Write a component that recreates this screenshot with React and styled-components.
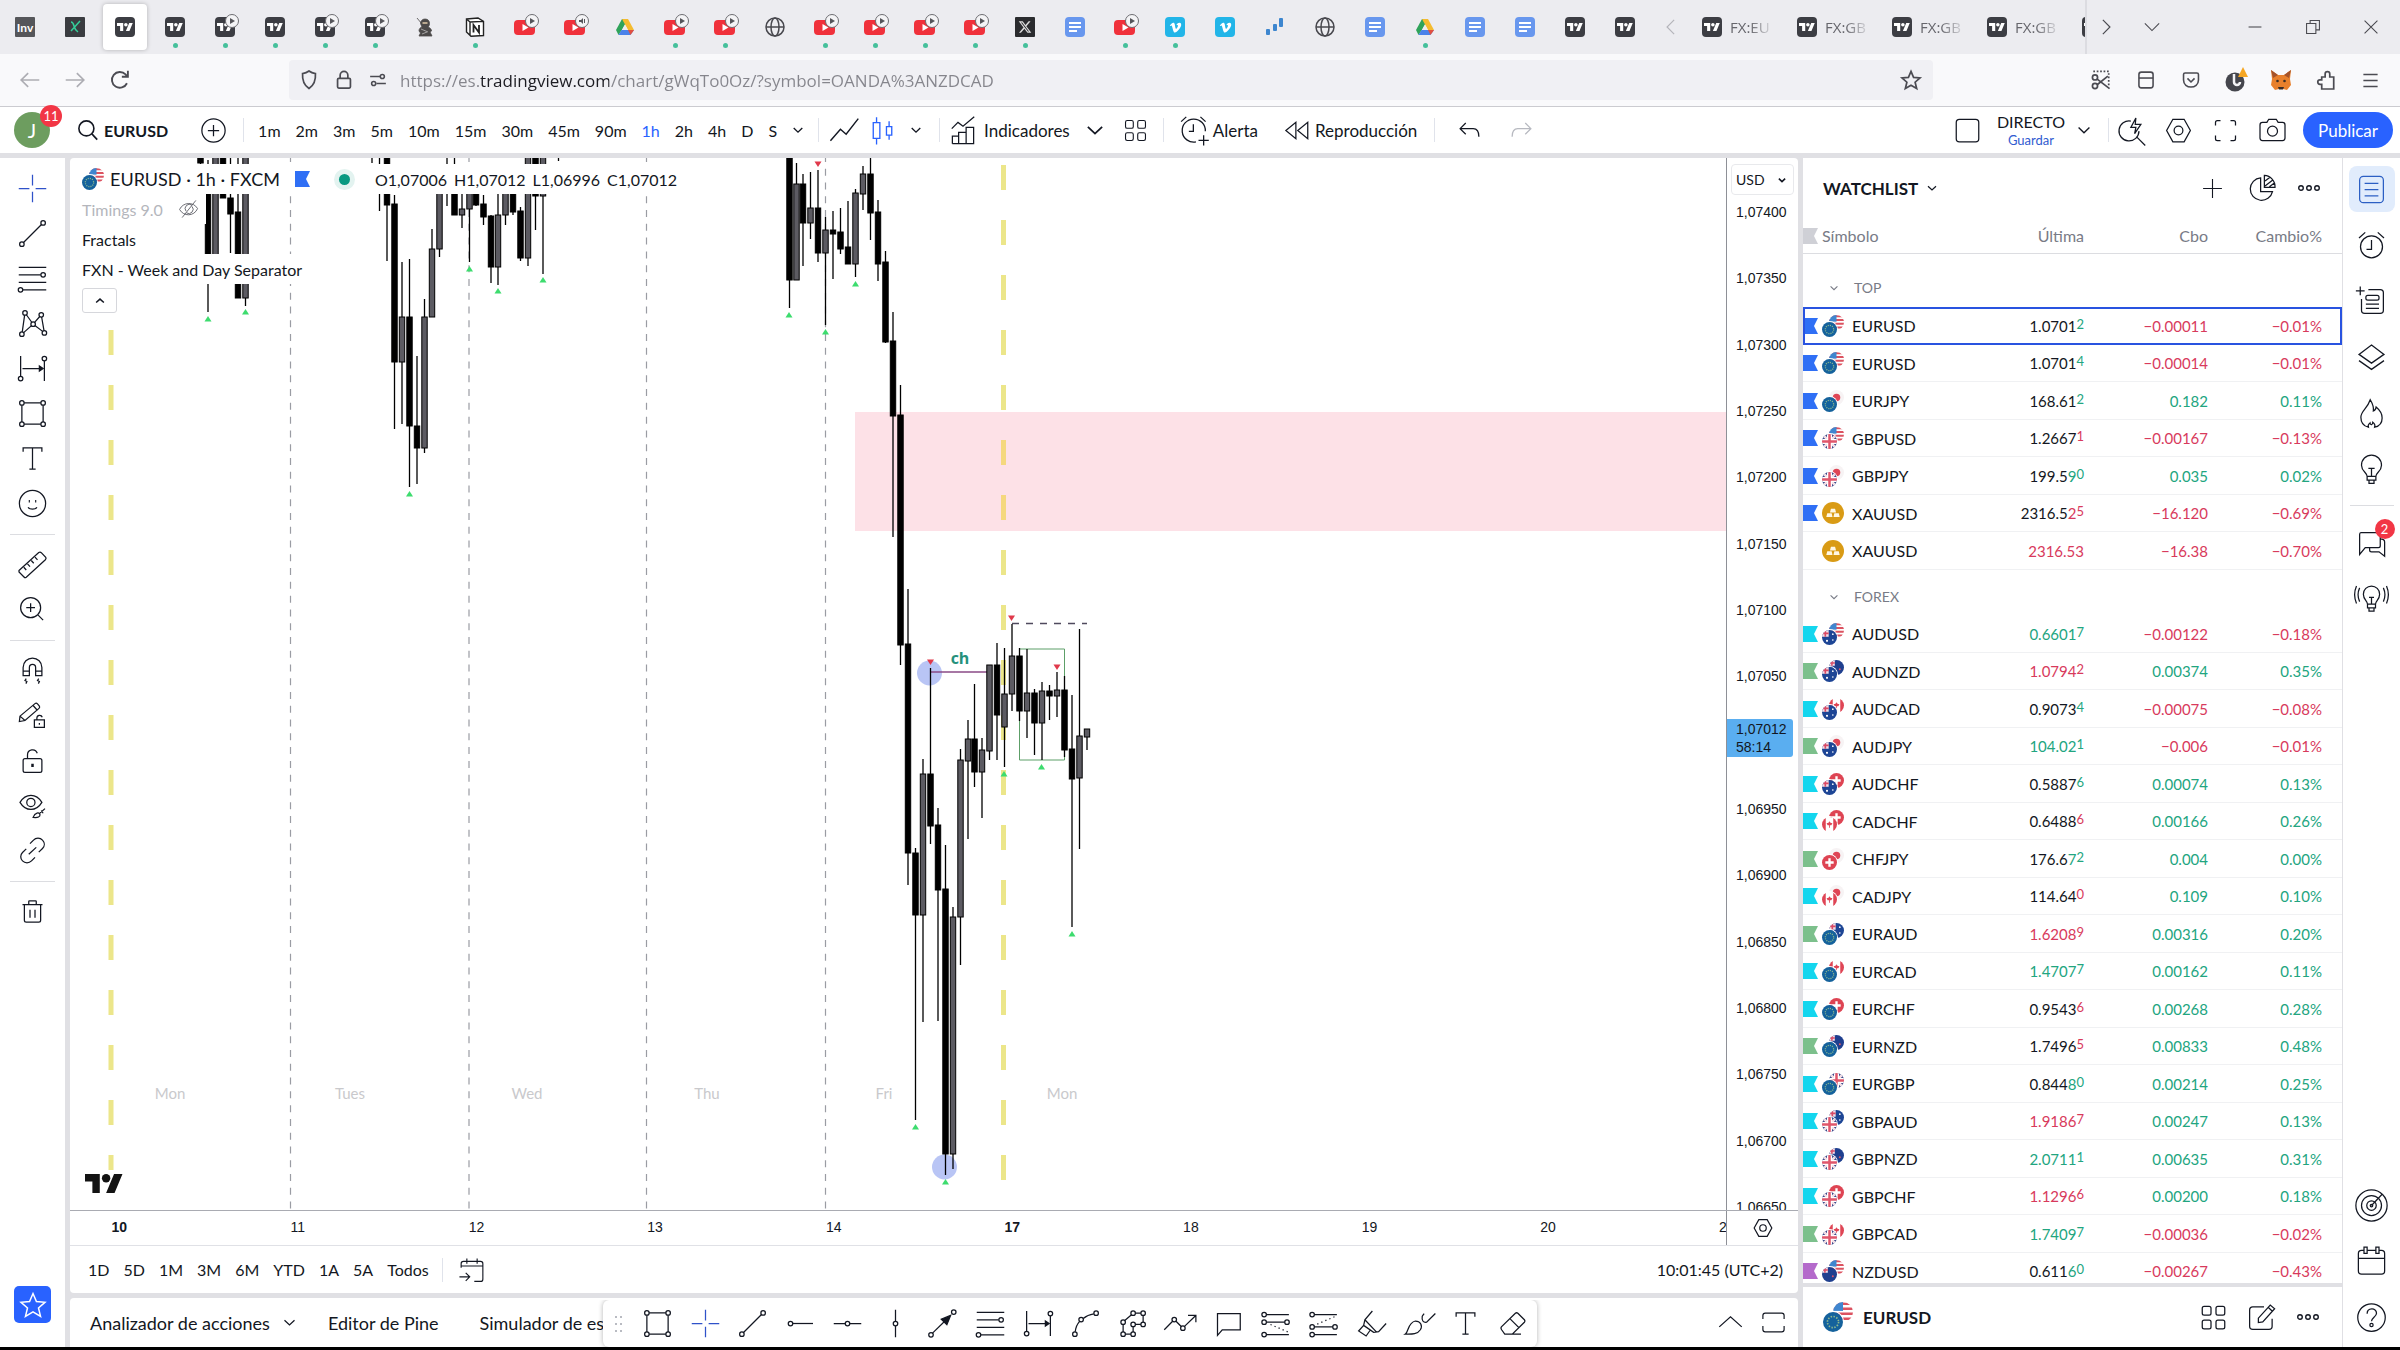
import React from 'react';
import styled, { createGlobalStyle, css } from 'styled-components';
import { FaVimeoV, FaXTwitter } from 'react-icons/fa6';

const GlobalStyle = createGlobalStyle`
    * {
        box-sizing: border-box;
    }

    body {
        margin: 0;
        background: #000;
        color: #131722;
        font-family: Lato, 'Liberation Sans', sans-serif;
        font-size: 16px;
    }

    button, input, select {
        font: inherit;
        color: inherit;
        background: none;
        border: none;
        padding: 0;
        margin: 0;
    }

    button {
        cursor: pointer;
    }

    svg {
        display: block;
        flex-shrink: 0;
    }
`;

/* ---------- Icons (28 x 28 grid, thin strokes) ---------- */

const dot = (cx, cy, r = 1.8) => <circle key={`${cx}-${cy}`} cx={cx} cy={cy} r={r} />;

const ICONS = {
    cross: <path d="M14 3v8.5M14 16.5V25M3 14h8.5M16.5 14H25" />,
    trend: <>{dot(5.5, 22.5)}{dot(22.5, 5.5)}<path d="M6.8 21.2 21.2 6.8" /></>,
    fib: <><path d="M3 5h22M3 11h17.6M3 17h22M6.2 23H25" />{dot(22.5, 11)}{dot(4.4, 23)}</>,
    pattern: (
        <>
            {dot(8, 5.5)}{dot(21, 7)}{dot(14.5, 14.5)}{dot(5.5, 22.5)}{dot(23.5, 21.5)}
            <path d="M5.8 20.7 7.7 7.3M9.1 7l4.3 6M15.7 13.1l4.1-4.7M21.3 8.8l1.9 10.9M6.9 21.3l6.3-5.6M15.9 15.6l6.2 4.7" />
        </>
    ),
    projection: (
        <>
            {dot(4.5, 22)}{dot(23.5, 6)}
            <path d="M4.5 4v16.2M23.5 7.8V24M6 14h14" />
            <path d="m19.5 12 3 2-3 2z" fill="currentColor" />
        </>
    ),
    rect: (
        <>
            {dot(5.5, 5.5)}{dot(22.5, 5.5)}{dot(5.5, 22.5)}{dot(22.5, 22.5)}
            <path d="M7.3 5.5h13.4M7.3 22.5h13.4M5.5 7.3v13.4M22.5 7.3v13.4" />
        </>
    ),
    text: <path d="M6.5 8.5v-3h15v3M14 5.5v17M11.5 22.5h5" />,
    smile: (
        <>
            <circle cx="14" cy="14" r="10.5" />
            <path d="M10.5 17c1 2 6 2 7 0" />
            <path d="M11 12.2h.9M16.1 12.2h.9" strokeWidth="2" />
        </>
    ),
    ruler: (
        <>
            <path d="M3.2 18.8 19 4.4q1.2-.8 2.2.3l3.4 3.6q.6 1-.3 1.9L9 24.2q-1 .7-1.8-.2l-4-4z" />
            <path d="m7 16.2 2 2.2M10 13.5l2 2.2M13 10.8l2 2.2M16 8.1l2 2.2" />
        </>
    ),
    zoomIn: <><circle cx="12.5" cy="12.5" r="8" /><path d="m18.5 18.5 4 4M12.5 9v7M9 12.5h7" /></>,
    magnet: (
        <>
            <path d="M6.5 18v-6.5a7.5 7.5 0 0 1 15 0V18h-5v-6.5a2.5 2.5 0 0 0-5 0V18zM6.5 14.5h5M16.5 14.5h5" />
            <path d="M9 20.5l-1 1.5 1.5.8-.8 1.7M19 20.5l-1 1.5 1.5.8-.8 1.7" />
        </>
    ),
    pencilLock: (
        <>
            <path d="m4 14.5 12-10q1-.8 2 .2l1.5 1.8q.6 1-.3 1.8L8 18l-4.5.8zM4.2 14.7 8 18M14.5 6l3.5 4" />
            <path d="M15.5 17.5h8v6h-8zM17.5 17.5V16a2.2 2.2 0 0 1 4.3-.6M19.5 20v1.4" />
        </>
    ),
    lock: (
        <>
            <rect x="6.5" y="12.5" width="15" height="11" rx="1.5" />
            <path d="M10 12.5v-3a4 4 0 0 1 7.8-1.3" />
            <path d="M14 16.6v2.6" strokeWidth="2" />
        </>
    ),
    eyeBrush: (
        <>
            <path d="M4 11.5c4.5-7.5 13-7.5 17.5 0-4.5 7.5-13 7.5-17.5 0z" />
            <circle cx="12.7" cy="11.5" r="3.3" />
            <path d="M14.5 23.5c1.5-4 5-4.5 5.5-2.2.2 1.6-1.5 2.7-5.5 2.2zM20 20l4-3.5M21 18l1.5 2.2" />
        </>
    ),
    link: (
        <>
            <path d="m12 8.5 2.8-2.8a4.7 4.7 0 0 1 7.2 0c1.9 2 1.9 4.8 0 6.7L19 15.3M9 12.7l-3 2.9a4.7 4.7 0 0 0 0 6.7c2 2 5.2 2 7.2 0l2.8-2.8" />
            <path d="m11 17 6-5.5" />
        </>
    ),
    trash: <path d="M6 8.5h16M11 8V6q0-.5.5-.5h5q.5 0 .5.5v2M7.5 8.5V21q0 1.5 1.5 1.5h10q1.5 0 1.5-1.5V8.5M12 12.5V19M16 12.5V19" />,
    star: <path d="m14 4 3 7 7.5.6-5.7 5 1.8 7.4-6.6-4-6.6 4 1.8-7.4-5.7-5L11 11z" />,
    search: <><circle cx="12.5" cy="12.5" r="7" /><path d="m17.6 17.6 5 5.4" /></>,
    plusCircle: <><circle cx="14" cy="14" r="9.3" /><path d="M14 9.5v9M9.5 14h9" /></>,
    chevronDown: <path d="m10 12.2 4 3.8 4-3.8" />,
    chevronUp: <path d="m5 17.5 9-8 9 8" />,
    lineStyle: <path d="m4.5 21.5 7-8 4 3.5 8.5-11" />,
    candles: (
        <path d="M7 8h5v12H7zM9.5 4v4M9.5 20v4.5M17 11h4v6.5h-4zM19 7v4M19 17.5V21" />
    ),
    indicators: (
        <>
            <path d="M3.5 24.5v-6h5v6M8.5 24.5v-9h6v9M14.5 19.5v-8h6v13h-17M14.5 24.5v-5" />
            <path d="m3 12.5 5-5 4 3L21 3" />
        </>
    ),
    grid4: (
        <>
            <rect x="5" y="5" width="7" height="7" rx="1.5" /><rect x="16" y="5" width="7" height="7" rx="1.5" />
            <rect x="5" y="16" width="7" height="7" rx="1.5" /><rect x="16" y="16" width="7" height="7" rx="1.5" />
        </>
    ),
    alarmAdd: (
        <path d="M15.5 23.3A9 9 0 1 1 22.8 15M13.5 9.5v5.5H10M21.5 18v8M17.5 22h8M4 7.5l4-3.7M19 3.8l4 3.7" />
    ),
    alarm: <><circle cx="14" cy="15" r="8.8" /><path d="M14 9.5V17h-4M4 8l5-4.5M19 3.5 24 8" /></>,
    replay: <path d="M13.5 7.5v13l-8-6.5zM23 7.5v13L15 14z" />,
    undo: <path d="m11 8-4.5 4.5L11 17M6.5 12.5H17c3 0 4.5 2.5 4.5 6.5" />,
    redo: <path d="m17 8 4.5 4.5L17 17M21.5 12.5H11c-3 0-4.5 2.5-4.5 6.5" />,
    square: <rect x="5" y="5" width="18" height="18" rx="2.5" />,
    quick: <path d="M13.5 6.5A8 8 0 1 0 20 14.5M18.5 19.5 25 26M17.5 4l-4 7.5h4l-1 5 5-7.5H17z" />,
    hex: <><path d="M9.5 5h9l5 9-5 9h-9l-5-9z" /><circle cx="14" cy="14" r="3.5" /></>,
    fullscreen: <path d="M6 10V7.5Q6 6 7.5 6H10M18 6h2.5Q22 6 22 7.5V10M22 18v2.5q0 1.5-1.5 1.5H18M10 22H7.5Q6 22 6 20.5V18" />,
    expand: <path d="M5 11V8q0-2 2-2h14q2 0 2 2v3M5 17v3q0 2 2 2h14q2 0 2-2v-3" />,
    camera: (
        <>
            <path d="M9.5 7.5 11 5h6l1.5 2.5H22q2 0 2 2V20q0 2-2 2H6q-2 0-2-2V9.5q0-2 2-2z" />
            <circle cx="14" cy="14.5" r="4" />
        </>
    ),
    plus: <path d="M14 5.5v17M5.5 14h17" />,
    pie: (
        <>
            <path d="M12.5 5.5a9 9 0 1 0 9.5 11h-9.5z" />
            <path d="M15.5 3.5V13H24a9 9 0 0 0-8.5-9.5zM16 8l4-3M16 12l6.5-5M19.5 12.5l4-3" />
        </>
    ),
    dots: <>{dot(7, 14, 2)}{dot(14, 14, 2)}{dot(21, 14, 2)}</>,
    list: <><rect x="4.5" y="3.5" width="19" height="21" rx="3" /><path d="M8.5 9h11M8.5 14h11M8.5 19h11" /></>,
    note: (
        <>
            <path d="M11.5 4.5H21q2.5 0 2.5 2.5v14q0 2.5-2.5 2.5H8.5Q6 23.5 6 21v-9M1.5 5.5h7M5 2v7" />
            <rect x="9.5" y="9" width="10.5" height="3.8" rx="1.5" />
            <path d="M9.5 16H20M9.5 19.5H20" />
        </>
    ),
    layers: <path d="m14 4 10 7.5-10 7-10-7zM4 16.5l10 7 10-7" />,
    flame: <path d="M11.5 25c-4-1-6-4-6-8 0-5 5-6.5 7.5-14 1.5 2.5 3 5.5 2.5 9 1.500-.5 2-1.500 2.200-3.200 3 2.500 4.800 5.500 4.800 8.700 0 4-2 6.500-6 7.500.5-1.500 0-3-1.500-4 0 1.300-.3 1.800-1 2-.8-.2-1.200-.8-1.200-1.500-1.300 1-1.800 2.200-1.300 3.500z" />,
    bulb: (
        <path d="M10.5 19.5c0-3-4.500-4-4.500-9a8 8 0 0 1 16 0c0 5-4.500 6-4.500 9zM10.5 19.5v3h7v-3M12 22.5V25h4v-2.500M14 19v-6M11.5 13h5" />
    ),
    chat: <path d="M5.5 6h14Q21 6 21 7.5v9q0 1.500-1.500 1.500H9l-4.500 5.500v-16Q4.500 6 5.500 6zM21 11q3.500 0 3.500 2.500V25L20 21.500h-6q-1.500 0-1.500-1.500v-2" />,
    stream: (
        <>
            <path d="M10.8 18.5c0-2.5-3.300-3.500-3.300-8a6.500 6.500 0 0 1 13 0c0 4.500-3.300 5.500-3.300 8zM10.8 18.5v3h6.400v-3M12 21.5V24h4v-2.500M14 18v-5M12 13h4" />
            <path d="M4.5 5.5q-2.500 5.500 0 11M2 4q-3 7 0 14M23.5 5.5q2.500 5.500 0 11M26 4q3 7 0 14" />
        </>
    ),
    target: (
        <>
            <circle cx="14" cy="14" r="12.5" /><circle cx="14" cy="14" r="8" /><circle cx="14" cy="14" r="3.8" />
            <path d="m14 14 8.5-9" />{dot(14, 14, 1)}
        </>
    ),
    calendar: (
        <>
            <rect x="3.5" y="5" width="21" height="19" rx="2.5" />
            <path d="M3.5 11.5h21" />
            <path d="M8 2.5h2.5v5H8zM17.5 2.5H20v5h-2.5z" fill="#fff" />
        </>
    ),
    help: (
        <>
            <circle cx="14" cy="14" r="11" />
            <path d="M10.5 11c0-5 7.5-5 7.5-.5 0 3-4 3.5-4 6.5" />
            {dot(14, 20, 1.3)}
        </>
    ),
    goTo: <path d="M4.5 12V8.5q0-2 2-2h15q2 0 2 2V22q0 2-2 2H16M4.5 10.5h19M9.5 4v4.5M18.5 4v4.5M3 20h9M8.5 16.5 12 20l-3.5 3.5" />,
    edit: (
        <path d="M16 5.5H7Q4.5 5.5 4.5 8v13q0 2.5 2.5 2.5h13q2.5 0 2.5-2.5v-6M11.5 18v-3.5L21 4l3.5 3L15 17.5zM19.5 6l3.2 3" />
    ),
    hRay: <>{dot(6, 14)}<path d="M7.8 14H24" /></>,
    hLine: <>{dot(14, 14)}<path d="M3 14h9.2M15.8 14H25" /></>,
    vLine: <>{dot(14, 14)}<path d="M14 3v9.2M14 15.8V25" /></>,
    arrow: (
        <>
            {dot(4.8, 23)}{dot(23, 4.8)}
            <path d="M6 21.7 17 11" />
            <path d="m20.5 7.5-7.5 3 4.5 4.5z" fill="currentColor" />
        </>
    ),
    curve: <>{dot(5.5, 22.5)}{dot(10.5, 10.8)}{dot(22.5, 5.7)}<path d="M5.8 20.6q.5-5 3.5-8.3M12.2 10q3.5-3 8.4-3.7" /></>,
    polyline: (
        <>
            {[[5.7, 22.5], [13.7, 22.5], [13.7, 14.7], [21.7, 14.7], [21.7, 5.7], [13.7, 5.7], [5.7, 12.9]].map(([x, y]) => dot(x, y))}
            <path d="M7.5 22.5h4.4M13.7 20.7v-4.2M15.5 14.7h4.4M21.7 12.9V7.5M19.9 5.7h-4.4M12.4 7 7 11.6M5.7 14.7v6" />
        </>
    ),
    zigzag: <>{dot(9, 10.8)}{dot(15.9, 17.7)}<path d="m1 19 6.7-6.8M10.4 12.2l4.2 4.2M17.2 16.3 26 7.8M20 7.5h6.3V13" /></>,
    callout: <path d="M5.2 23.5V6h18.2v13H9z" />,
    fibExt: (
        <>
            {dot(4.9, 6.8)}{dot(4.9, 12.9)}{dot(23.2, 12.9)}{dot(4.9, 22.8)}
            <path d="M6.7 6.8h18M6.7 12.9h14.7M6.7 22.8h18" />
            <path d="m10 14.8 14 6" strokeDasharray="1 2.5" />
        </>
    ),
    fibRev: (
        <>
            {dot(4.9, 6.8)}{dot(4.9, 16.7)}{dot(23.2, 16.7)}{dot(4.9, 22.8)}
            <path d="M6.7 6.8h18M6.7 16.7h14.7M6.7 22.8h18" />
            <path d="m9 14.5 14-6" strokeDasharray="1 2.5" />
        </>
    ),
    highlighter: <path d="m15.5 4-6 7-1 4.5 8 5.5 4-.5 6-6.5M9.5 11l9 9.500M8.5 15.5l-4 4.500 6 4 3.500-5" />,
    brush: <path d="M3.5 22.5c2.500-1.500 2-9.500 8-10.500 4 0 6 3.500 4 7-2.500 4-7.500 3.500-12 3.500zM17 8q-.8 5.500 3.500 5l7-7M17 8l1.500-2" />,
    eraser: <path d="m4.5 16.5 11-10.700q1-.8 2 0l5.200 5.200q.8 1 0 2L13 22.500H7L4.500 19q-1-1.500 0-2.500zM11.5 10.5l7 7M7 22.5h13" />,
    eyeOff: <path d="M3 14.5C7 6 19 5 24 13.5M3 14.5c4.500 8.500 17 8.500 21-1M17.5 9.5a5 5 0 0 0-7 7M11 18.5a5 5 0 0 0 6.500-7.500M22 4 6 24" />,
    back: <path d="M24 14H5M12 6.5 4.5 14l7.5 7.5" />,
    forward: <path d="M4 14h19M16 6.5l7.5 7.5-7.5 7.5" />,
    reload: <path d="M21.5 17.5A8.5 8.5 0 1 1 20 8l2 2.5M22.5 4v6.5H16" />,
    shield: <path d="M14 3.5c2.5 2 5 2.7 7.5 3C22 13.500 20.500 19.500 14 24c-6.500-4.500-8-10.500-7.500-17.500 2.500-.3 5-1 7.500-3z" />,
    padlock: <><rect x="6.5" y="12" width="15" height="11.5" rx="1.5" /><path d="M9.5 12V8.5a4.5 4.5 0 0 1 9 0V12" /></>,
    sliders: <>{dot(19.5, 9.5, 2.6)}{dot(8.5, 18.5, 2.6)}<path d="M4 9.5h12.5M12 18.5h12" /></>,
    windowIcon: <><rect x="5" y="4" width="18" height="20" rx="3" /><path d="M5 11.5h18" /></>,
    pocket: <path d="M6.5 5h15q2 0 2 2v7c0 12-19 12-19 0V7q0-2 2-2zM9.5 12l4.5 4.5 4.5-4.5" />,
    puzzle: <path d="M9 10.5h4V7a2.7 2.7 0 0 1 5.4 0v3.5H23v14H9V19H7a2.6 2.6 0 0 1 0-5.2h2z" />,
    menu: <path d="M4.5 6h19M4.5 14h19M4.5 22h19" />,
    minimise: <path d="M5 14h18" />,
    restore: <path d="M5 9h13v14H5zM10 9V5h13v13h-5" />,
    close: <path d="m5 5 18 18M23 5 5 23" />,
    chevronLeftL: <path d="m18 5-9 9 9 9" />,
    chevronRightL: <path d="m10 5 9 9-9 9" />,
    chevronDownL: <path d="m4 9 10 10L24 9" />,
    capture: (
        <>
            <path d="M5 4h18v18" strokeDasharray="2 2" />
            {dot(7, 11, 3)}{dot(7, 21, 3)}<path d="m9.5 19.5 12.5-10M9.5 13 24 24" />
        </>
    ),
};

const Icon = ({ name, size = 35, weight = 1 }) => (
    <svg width={size} height={size} viewBox="0 0 28 28" fill="none" stroke="currentColor" strokeWidth={weight} aria-hidden="true">
        {ICONS[name]}
    </svg>
);

const TvLogo = ({ width = 20, color = '#fff' }) => (
    <svg width={width} height={width / 2} viewBox="0 0 36 18" fill={color} aria-hidden="true">
        <path d="M14 18H7V7H0V0h14v18zM28 18h-8l7.5-18h8L28 18z" />
        <circle cx="20" cy="4" r="4" />
    </svg>
);

/* ---------- Currency discs ---------- */

const FLAGS = {
    EUR: (
        <>
            <rect width="18" height="18" fill="#15629c" />
            <circle cx="9" cy="9" r="5" fill="none" stroke="#8fb98e" strokeWidth="1.5" strokeDasharray="1.3 1.3" />
        </>
    ),
    USD: (
        <>
            <rect width="18" height="18" fill="#fff" />
            <path d="M0 1.5h18M0 6h18M0 10.5h18M0 15h18" stroke="#dc5361" strokeWidth="2.3" />
            <rect width="9" height="8" fill="#3f86cf" />
        </>
    ),
    JPY: <><rect width="18" height="18" fill="#f7f3f4" /><circle cx="9" cy="9" r="4.5" fill="#df4555" /></>,
    GBP: (
        <>
            <rect width="18" height="18" fill="#3b4a8c" />
            <path d="M0 0l18 18M18 0 0 18" stroke="#f3dfe5" strokeWidth="3" />
            <path d="M9 0v18M0 9h18" stroke="#fff" strokeWidth="6" />
            <path d="M9 0v18M0 9h18" stroke="#e0566b" strokeWidth="3" />
        </>
    ),
    AUD: (
        <>
            <rect width="18" height="18" fill="#1d4595" />
            <path d="M0 0h8v8H0z" fill="#f0dfe8" />
            <path d="M4 0v8M0 4h8" stroke="#d94a66" strokeWidth="2" />
            <circle cx="6" cy="13" r="1.3" fill="#fff" /><circle cx="13" cy="5" r="1" fill="#fff" /><circle cx="13" cy="12" r="1" fill="#fff" />
        </>
    ),
    NZD: (
        <>
            <rect width="18" height="18" fill="#1f3f8f" />
            <path d="M0 0h7v7H0z" fill="#f0dfe8" />
            <path d="M3.5 0v7M0 3.5h7" stroke="#d94a66" strokeWidth="1.8" />
            <circle cx="13" cy="11" r="1.2" fill="#e0566b" />
        </>
    ),
    CAD: (
        <>
            <rect width="18" height="18" fill="#fff" />
            <path d="M0 0h4.5v18H0zM13.5 0H18v18h-4.5z" fill="#df4555" />
            <path d="m9 5 1.2 2 2.3.5-1.300 2.500H9.500v3h-1v-3H6.800L5.500 7.500 7.800 7z" fill="#df4555" />
        </>
    ),
    CHF: <><rect width="18" height="18" fill="#de4453" /><path d="M9 4v10M4 9h10" stroke="#fff" strokeWidth="2.8" /></>,
    XAU: (
        <>
            <rect width="18" height="18" fill="#d99b15" />
            <path d="M7.3 5.5h3.4l.8 3h-5zM4.3 9.3h3.6l.7 3H3.5zM10.1 9.3h3.6l.8 3H9.4z" fill="#fff8e5" />
        </>
    ),
};

const PairBox = styled.span`
    position: relative;
    flex-shrink: 0;
    width: ${({ $size }) => $size}px;
    height: ${({ $size }) => $size}px;
`;

const Disc = styled.svg`
    position: absolute;
    border-radius: 50%;
    ${({ $place }) => $place === 'back' && css`
        top: 0;
        right: 0;
    `}
    ${({ $place }) => $place === 'front' && css`
        bottom: 0;
        left: 0;
        box-shadow: 0 0 0 1px #fff;
    `}
`;

const PairIcon = ({ symbol, size = 22 }) => {
    const base = symbol.slice(0, 3);
    const quote = symbol.slice(3);
    if (base === 'XAU') {
        return (
            <PairBox $size={size}>
                <Disc width={size} height={size} viewBox="0 0 18 18">{FLAGS.XAU}</Disc>
            </PairBox>
        );
    }
    const disc = Math.round(size * 0.67);
    return (
        <PairBox $size={size}>
            <Disc $place="back" width={disc} height={disc} viewBox="0 0 18 18">{FLAGS[quote]}</Disc>
            <Disc $place="front" width={disc} height={disc} viewBox="0 0 18 18">{FLAGS[base]}</Disc>
        </PairBox>
    );
};

const RibbonShape = ({ color }) => (
    <svg width="15" height="16" viewBox="0 0 15 16" aria-hidden="true">
        <path d="M0 0h15l-4 8 4 8H0z" fill={color} />
    </svg>
);

/* ---------- Browser chrome ---------- */

const Favicon = ({ kind }) => {
    switch (kind) {
        case 'tv':
            return <FavBox $bg="#3c3d43" $round><TvLogo width={16} /></FavBox>;
        case 'inv':
            return <FavBox $bg="#55565a"><FavText>Inv</FavText></FavBox>;
        case 'chi':
            return (
                <FavBox $bg="#3a3c40">
                    <svg width="14" height="14" viewBox="0 0 14 14" fill="none" stroke="#35cf9b" strokeWidth="1.5">
                        <path d="M3 2q2 0 3 4t4 6M12 1 3 11" />
                    </svg>
                </FavBox>
            );
        case 'yt':
            return (
                <svg width="22" height="20" viewBox="0 0 22 20">
                    <rect x="0" y="3" width="21" height="15" rx="4" fill="#f0313b" />
                    <path d="m8.5 7 6 3.5-6 3.5z" fill="#fff" />
                </svg>
            );
        case 'ninja':
            return (
                <svg width="20" height="20" viewBox="0 0 20 20" fill="#4c4a4a">
                    <path d="m2 1 5 6M10 2c3 0 4.5 2 4.5 4.5S13 10 13 10c2.5 1 3.5 2.500 3.500 4l-1.500 1 2 4H4l1.500-3L4 14c0-2.500 1.500-3.500 3-4L5.500 6.500C5.500 4 7.500 2 10 2z" stroke="#4c4a4a" strokeWidth="0.8" />
                    <path d="M7.5 6h5" stroke="#d9c3a4" strokeWidth="1.6" />
                    <path d="m6 12 7 3M7 17l5-2" stroke="#a3a1a1" />
                </svg>
            );
        case 'notion':
            return (
                <svg width="20" height="20" viewBox="0 0 20 20" fill="#fff" stroke="#222" strokeWidth="1.4">
                    <path d="M1.5 2 13 1l5.5 3.5v14L6 19.3 1.5 15zM5 5l13.5-.6M1.5 2 5 5v13" />
                    <path d="M8.5 15.5V8l5.5 7.5V8" fill="none" strokeWidth="1.8" />
                </svg>
            );
        case 'drive':
            return (
                <svg width="20" height="20" viewBox="0 0 20 20">
                    <path d="M7 2h6L6.5 13.5l-3 4.5L1 13z" fill="#2fa35a" />
                    <path d="M7 2h6l6 11h-6z" fill="#f4bb30" />
                    <path d="M6.5 13H19l-3.5 5h-12z" fill="#4b82ea" />
                    <path d="M13 13h6l-3.5 5z" fill="#e2503f" />
                    <path d="m10 7.5 3 5.5H7z" fill="#ededf0" />
                </svg>
            );
        case 'globe':
            return (
                <svg width="20" height="20" viewBox="0 0 20 20" fill="none" stroke="#48484e" strokeWidth="1.5">
                    <circle cx="10" cy="10" r="9" /><ellipse cx="10" cy="10" rx="4" ry="9" /><path d="M1 10h18" />
                </svg>
            );
        case 'x':
            return <FavBox $bg="#2a2b2e"><FaXTwitter size={14} color="#ddd" /></FavBox>;
        case 'docs':
            return (
                <FavBox $bg="#6897ee" $round>
                    <svg width="12" height="12" viewBox="0 0 12 12" stroke="#fff" strokeWidth="2">
                        <path d="M0 2h12M0 6h12M0 10h8" />
                    </svg>
                </FavBox>
            );
        case 'vimeo':
            return <FavBox $bg="#22b5e8" $round><FaVimeoV size={13} color="#fff" /></FavBox>;
        default:
            return (
                <svg width="20" height="20" viewBox="0 0 20 20" fill="#3d86cf">
                    <rect x="1" y="12" width="4" height="6" rx="1" /><rect x="8" y="7" width="4" height="7" rx="1" /><rect x="14" y="1" width="4" height="9" rx="1" />
                </svg>
            );
    }
};

const Window = styled.div`
    display: flex;
    flex-direction: column;
    height: 100vh;
    background: #e0e0e4;
    border-bottom: 3px solid #000;
    overflow: hidden;
`;

const TabStrip = styled.div`
    display: flex;
    align-items: center;
    height: 54px;
    background: #ececf0;
    flex-shrink: 0;
`;

const PinnedTab = styled.button`
    position: relative;
    display: flex;
    align-items: center;
    justify-content: center;
    width: 44px;
    height: 46px;
    margin: 0 3px;
    flex-shrink: 0;
    border-radius: 4px;
    ${({ $active }) => $active && css`
        background: #fff;
        box-shadow: 0 0 4px rgba(0, 0, 0, 0.25);
    `}
`;

const LoadedDot = styled.span`
    position: absolute;
    bottom: 2px;
    left: 20px;
    width: 5px;
    height: 5px;
    border-radius: 50%;
    background: #45c09b;
`;

const MediaBadge = styled.span`
    position: absolute;
    top: 10px;
    right: 8px;
    display: flex;
    align-items: center;
    justify-content: center;
    width: 14px;
    height: 14px;
    border-radius: 50%;
    border: 1px solid #6d6d72;
    background: #f4f4f6;
`;

const FavBox = styled.span`
    display: flex;
    align-items: center;
    justify-content: center;
    width: 20px;
    height: 20px;
    flex-shrink: 0;
    border-radius: ${({ $round }) => ($round ? 4 : 1)}px;
    background: ${({ $bg }) => $bg};
`;

const FavText = styled.span`
    color: #fff;
    font-size: 12px;
    font-weight: 700;
`;

const TabScroll = styled.button`
    display: flex;
    align-items: center;
    justify-content: center;
    width: ${({ $width = 44 }) => $width}px;
    height: 54px;
    color: ${({ $dim }) => ($dim ? '#b4b4ba' : '#4a4a50')};
`;

const TextTabs = styled.div`
    display: flex;
    flex-shrink: 0;
    width: 385px;
    margin-left: 10px;
    overflow: hidden;
    border-right: 2px solid #dcdce1;
`;

const TextTab = styled.button`
    display: flex;
    align-items: center;
    gap: 8px;
    flex-shrink: 0;
    width: 95px;
    height: 54px;
    font-family: 'Open Sans', sans-serif;
    font-size: 15px;
    color: #66666c;
`;

const TabTitle = styled.span`
    white-space: nowrap;
    mask-image: linear-gradient(90deg, #000 50%, rgba(0, 0, 0, 0.2));
`;

const WindowButtons = styled.div`
    display: flex;
    margin-left: auto;
`;

const NavBar = styled.div`
    display: flex;
    align-items: center;
    height: 53px;
    padding: 0 7px;
    background: #f9f9fb;
    border-bottom: 1px solid #cbcbd0;
    flex-shrink: 0;
`;

const NavButton = styled.button`
    display: flex;
    align-items: center;
    justify-content: center;
    width: 45px;
    height: 40px;
    color: ${({ $dim }) => ($dim ? '#adadb3' : '#4b4b52')};
`;

const AddressBox = styled.label`
    display: flex;
    align-items: center;
    flex: 1;
    gap: 11px;
    height: 40px;
    margin: 0 145px 0 147px;
    padding: 0 10px 0 8px;
    border-radius: 4px;
    background: #f0f0f4;
    color: #4b4b52;
`;

const AddressInput = styled.input`
    flex: 1;
    min-width: 0;
    font-family: 'Open Sans', sans-serif;
    font-size: 17px;
    color: transparent;
    background-image: linear-gradient(90deg, #85858c 80px, #1c1c22 80px, #1c1c22 209px, #85858c 209px);
    background-clip: text;
    -webkit-background-clip: text;
`;

/* ---------- Chart header ---------- */

const TopBar = styled.header`
    display: flex;
    align-items: center;
    height: 46px;
    padding: 0 7px 0 14px;
    background: #fff;
    flex-shrink: 0;
`;

const Avatar = styled.button`
    position: relative;
    width: 36px;
    height: 36px;
    margin-right: 23px;
    border-radius: 50%;
    background: #6d9d5f;
    color: #fff;
    font-size: 20px;
`;

const CountBadge = styled.span`
    position: absolute;
    top: ${({ $top }) => $top}px;
    right: ${({ $right }) => $right}px;
    display: flex;
    align-items: center;
    justify-content: center;
    min-width: ${({ $size }) => $size}px;
    height: ${({ $size }) => $size}px;
    border-radius: 50%;
    background: #f23645;
    color: #fff;
    font-size: 13px;
`;

const ToolButton = styled.button`
    display: flex;
    align-items: center;
    gap: 1px;
    height: 38px;
    font-size: ${({ $size = 17 }) => $size}px;
    font-weight: ${({ $bold }) => ($bold ? 700 : 400)};
    color: ${({ $accent, $dim }) => ($accent ? '#2962ff' : $dim ? '#b7b9c0' : '#131722')};
    white-space: nowrap;
`;

const PlusButton = styled(ToolButton)`
    margin: 0 4px 0 28px;
`;

const ReplayButton = styled(ToolButton)`
    margin-left: 21px;
`;

const RedoButton = styled(ToolButton)`
    margin-left: 17px;
`;

const Rule = styled.span`
    width: 1px;
    height: 24px;
    margin: 0 ${({ $m = 8 }) => $m}px;
    background: #e0e3eb;
`;

const Intervals = styled.div`
    display: flex;
    gap: 15px;
    padding: 0 6px;
`;

const Spacer = styled.div`
    flex: 1;
`;

const LayoutName = styled.button`
    display: flex;
    flex-direction: column;
    align-items: center;
    gap: 1px;
    margin-left: 12px;
    font-size: 16px;
    line-height: 20px;

    small {
        font-size: 13px;
        line-height: 15px;
        color: #2f5bd0;
    }
`;

const RightTools = styled.div`
    display: flex;
    gap: 12px;
    margin-right: 13px;
`;

const Publish = styled.button`
    height: 36px;
    padding: 0 15px;
    border-radius: 18px;
    background: #2962ff;
    color: #fff;
    font-size: 17px;
`;

/* ---------- Workspace ---------- */

const Workspace = styled.div`
    display: flex;
    flex: 1;
    min-height: 0;
    gap: 5px;
    margin-top: 5px;
`;

const SideTools = styled.nav`
    display: flex;
    flex-direction: column;
    align-items: center;
    width: 65px;
    padding: 8px 0 24px;
    background: #fff;
    flex-shrink: 0;
`;

const SideTool = styled.button`
    display: flex;
    align-items: center;
    justify-content: center;
    width: 45px;
    height: 45px;
    color: ${({ $accent }) => ($accent ? '#2f52c9' : '#131722')};
`;

const SideRule = styled.span`
    width: 45px;
    height: 1px;
    margin: 8px 0 7px;
    background: #dcdde1;
`;

const FavoriteButton = styled.button`
    display: flex;
    align-items: center;
    justify-content: center;
    width: 37px;
    height: 37px;
    margin-top: auto;
    border-radius: 5px;
    background: #2962ff;
    color: #fff;
`;

const Center = styled.main`
    display: flex;
    flex-direction: column;
    flex: 1;
    min-width: 0;
    gap: 5px;
`;

const ChartCard = styled.section`
    display: flex;
    flex-direction: column;
    flex: 1;
    min-height: 0;
    background: #fff;
    border-radius: 4px;
    overflow: hidden;
`;

const PlotRow = styled.div`
    display: flex;
    flex: 1;
    min-height: 0;
    border-bottom: 1px solid #a9abb2;
`;

const Plot = styled.div`
    position: relative;
    flex: 1;
    min-width: 0;
`;

const PlotSvg = styled.svg`
    width: 100%;
    height: 100%;
`;

const Legend = styled.div`
    position: absolute;
    top: 6px;
    left: 9px;
    display: flex;
    flex-direction: column;
    align-items: flex-start;
`;

const LegendRow = styled.div`
    display: flex;
    align-items: center;
    height: 30px;
    padding: 0 5px 0 3px;
    background: #fff;
`;

const MutedRow = styled(LegendRow)`
    gap: 14px;
    color: #b4b6bc;

    svg {
        color: #55575f;
    }
`;

const LegendName = styled.span`
    padding: 0 15px 0 6px;
    font-size: 18px;
    white-space: pre;
`;

const MarketDot = styled.span`
    width: 11px;
    height: 11px;
    margin: 0 25px 0 29px;
    border-radius: 50%;
    background: #089981;
    box-shadow: 0 0 0 5px #e3f3f0;
`;

const Ohlc = styled.span`
    display: flex;
    gap: 7px;
`;

const Collapse = styled.button`
    display: flex;
    align-items: center;
    justify-content: center;
    width: 35px;
    height: 25px;
    margin: 4px 0 0 3px;
    border: 1px solid #d6d7dc;
    border-radius: 3px;
    background: #fff;
`;

const PlotLogo = styled.div`
    position: absolute;
    left: 15px;
    bottom: 17px;
`;

const PriceAxis = styled.div`
    position: relative;
    display: flex;
    flex-direction: column;
    width: 72px;
    flex-shrink: 0;
    border-left: 1px solid #8e9097;
    overflow: hidden;
`;

const CurrencyField = styled.label`
    display: flex;
    align-items: center;
    height: 31px;
    margin: 6px 4px -16px;
    padding-left: 4px;
    border: 1px solid #e8e9ec;
    border-radius: 4px;
    font-size: 14px;
    flex-shrink: 0;
`;

const CurrencySelect = styled.select`
    appearance: none;
    width: 38px;
`;

const PriceScale = styled.div`
    display: grid;
    grid-auto-rows: 1fr;
    flex: 1;
    margin-bottom: -30px;
    font-family: 'Liberation Sans', sans-serif;
    font-size: 14px;

    span {
        display: flex;
        align-items: center;
        padding-left: 9px;
    }
`;

const LastPrice = styled.div`
    position: absolute;
    top: 53%;
    margin-top: 3px;
    left: 0;
    width: 66px;
    height: 38px;
    padding: 1px 0 0 9px;
    border-radius: 0 3px 3px 0;
    background: #5aaef0;
    font-family: 'Liberation Sans', sans-serif;
    font-size: 14px;
    line-height: 18px;
`;

const TimeRow = styled.div`
    display: flex;
    height: 35px;
    border-bottom: 1px solid #e0e1e6;
`;

const TimeScale = styled.div`
    flex: 1;
    overflow: hidden;
`;

const TimeTrack = styled.div`
    display: grid;
    grid-template-columns: repeat(10, 1fr);
    height: 34px;
    margin: 0 -90px 0 -40px;
    font-family: 'Liberation Sans', sans-serif;
    font-size: 14px;

    span {
        display: flex;
        align-items: center;
        justify-content: center;
        padding-bottom: 2px;
    }
`;

const AxisSettings = styled.button`
    display: flex;
    align-items: center;
    justify-content: center;
    width: 72px;
    border-left: 1px solid #8e9097;
`;

const RangeBar = styled.div`
    display: flex;
    align-items: center;
    height: 47px;
    padding: 0 15px 0 18px;
`;

const Ranges = styled.div`
    display: flex;
    gap: 14px;
`;

const BottomBar = styled.footer`
    position: relative;
    display: flex;
    align-items: center;
    height: 49px;
    padding: 0 8px 0 20px;
    background: #fff;
    border-radius: 4px 4px 0 0;
    font-size: 18px;
    flex-shrink: 0;
`;

const PanelTab = styled.button`
    display: flex;
    align-items: center;
    gap: 2px;
    margin-right: ${({ $after = 41 }) => $after}px;
    white-space: nowrap;
`;

const PanelControls = styled.div`
    display: flex;
    gap: 9px;
    margin-left: auto;
`;

const FloatingTools = styled.div`
    position: absolute;
    left: 533px;
    bottom: 0;
    display: flex;
    align-items: center;
    width: 934px;
    height: 47px;
    border-radius: 6px;
    background: #fff;
    box-shadow: 0 0 5px rgba(0, 0, 0, 0.3);
    clip-path: inset(0 -6px 0 -6px);
`;

const DragHandle = styled.span`
    display: flex;
    justify-content: center;
    width: 31px;
`;

const FloatingTool = styled.button`
    display: flex;
    align-items: center;
    justify-content: center;
    flex: 1;
    color: ${({ $accent }) => ($accent ? '#2f52c9' : '#131722')};
`;

/* ---------- Watchlist ---------- */

const WatchPanel = styled.aside`
    display: flex;
    flex-direction: column;
    width: 539px;
    flex-shrink: 0;
    gap: 4px;
`;

const WatchCard = styled.section`
    display: flex;
    flex-direction: column;
    flex: 1;
    min-height: 0;
    overflow: hidden;
    background: #fff;
`;

const WatchHead = styled.div`
    display: flex;
    align-items: center;
    height: 60px;
    padding: 0 14px 0 20px;
    flex-shrink: 0;
`;

const WatchTitle = styled.button`
    display: flex;
    align-items: center;
    font-size: 17px;
    font-weight: 700;
    margin-right: auto;
`;

const HeadIcons = styled.div`
    display: flex;
    gap: 13px;

    button {
        width: 35px;
        height: 35px;
    }
`;

const Table = styled.table`
    width: 100%;
    table-layout: fixed;
    border-collapse: separate;
    border-spacing: 0;
    font-size: 15px;

    th {
        height: 36px;
        padding: 0;
        border-bottom: 1px solid #dcdde1;
        font-size: 16px;
        font-weight: 400;
        text-align: right;
        color: #787b86;
    }

    th:first-child {
        text-align: left;
    }

    th:last-child, td:last-child {
        padding-right: 20px;
    }
`;

const GroupCell = styled.td`
    height: ${({ $h }) => $h}px;
    padding: ${({ $h }) => ($h > 50 ? '14px' : '8px')} 0 0 19px;
    font-size: 14px;
    color: #787b86;
`;

const GroupButton = styled.button`
    display: flex;
    align-items: center;
    gap: 8px;
`;

const Row = styled.tr`
    td {
        height: 37px;
        padding: 0;
        border-bottom: 1px solid #f0f1f3;
        text-align: right;
    }

    &:nth-child(even) td {
        height: 38px;
    }

    ${({ $selected }) => $selected && css`
        outline: 2px solid #2953e0;
        outline-offset: -2px;
    `}
`;

const SymbolCell = styled.span`
    display: flex;
    align-items: center;
    font-size: 16px;
`;

const RibbonSlot = styled.span`
    width: 15px;
    margin-right: 4px;
`;

const SymbolName = styled.span`
    padding-left: 8px;
`;

const TONES = { up: '#22a580', down: '#d83a5c', flat: '#131722' };

const Value = styled.span`
    color: ${({ $tone }) => TONES[$tone]};
`;

const Pip = styled.span`
    position: relative;
    bottom: 3px;
    font-size: 13px;
    color: ${({ $tone }) => TONES[$tone]};
`;

const DetailCard = styled.section`
    display: flex;
    align-items: center;
    height: 60px;
    padding: 0 15px 0 20px;
    background: #fff;
    flex-shrink: 0;
    gap: 10px;

    strong {
        margin-right: auto;
        font-size: 17px;
    }
`;

const IconRail = styled.nav`
    display: flex;
    flex-direction: column;
    align-items: center;
    width: 57px;
    margin-left: -4px;
    padding: 3px 0 2px;
    background: #fff;
    flex-shrink: 0;
`;

const RailButton = styled.button`
    position: relative;
    display: flex;
    align-items: center;
    justify-content: center;
    width: 46px;
    height: 46px;
    margin: 5px 0;
    border-radius: 8px;
    ${({ $active }) => $active && css`
        background: #e1ecfc;
        color: #2c5fc4;
    `}
`;

const RailRule = styled.span`
    width: 44px;
    height: 1px;
    margin: 8px 0;
    background: #dcdde1;
`;

/* ---------- Data ---------- */

const PINNED = [
    ['inv'], ['chi'], ['tv', { active: true }], ['tv', { dot: true }], ['tv', { media: 'play', dot: true }],
    ['tv', { dot: true }], ['tv', { media: 'play', dot: true }], ['tv', { media: 'play', dot: true }], ['ninja'],
    ['notion', { dot: true }], ['yt', { media: 'play' }], ['yt', { media: 'sound' }], ['drive'],
    ['yt', { media: 'play', dot: true }], ['yt', { media: 'play', dot: true }], ['globe'],
    ['yt', { media: 'play', dot: true }], ['yt', { media: 'play', dot: true }], ['yt', { media: 'play', dot: true }],
    ['yt', { media: 'play', dot: true }], ['x', { dot: true }], ['docs'], ['yt', { media: 'play', dot: true }],
    ['vimeo', { dot: true }], ['vimeo'], ['bars'], ['globe'], ['docs'], ['drive', { dot: true }], ['docs'], ['docs'],
    ['tv'], ['tv'],
];

const INTERVALS = ['1m', '2m', '3m', '5m', '10m', '15m', '30m', '45m', '90m', '1h', '2h', '4h', 'D', 'S'];
const RANGES = ['1D', '5D', '1M', '3M', '6M', 'YTD', '1A', '5A', 'Todos'];
const SIDE_TOOLS = [
    ['cross', 'trend', 'fib', 'pattern', 'projection', 'rect', 'text', 'smile'],
    ['ruler', 'zoomIn'],
    ['magnet', 'pencilLock', 'lock', 'eyeBrush', 'link'],
    ['trash'],
];
const FLOATING = [
    'rect', 'cross', 'trend', 'hRay', 'hLine', 'vLine', 'arrow', 'fib', 'projection', 'curve', 'polyline',
    'zigzag', 'callout', 'fibExt', 'fibRev', 'highlighter', 'brush', 'text', 'eraser',
];
const PRICES = [
    '1,07400', '1,07350', '1,07300', '1,07250', '1,07200', '1,07150', '1,07100', '1,07050',
    '', '1,06950', '1,06900', '1,06850', '1,06800', '1,06750', '1,06700', '1,06650',
];
const DATES = ['10', '11', '12', '13', '14', '17', '18', '19', '20', '21'];
const WEEK_STARTS = ['10', '17'];

// [ribbon, symbol, last, coloured tail digits, pip, last tone, tail tone, change, change %]
const B = '#2f6ff5';
const C = '#14d6ee';
const G = '#7cc08c';
const TOP = [
    [B, 'EURUSD', '1.0701', '', '2', 'flat', 'up', '−0.00011', '−0.01%'],
    [B, 'EURUSD', '1.0701', '', '4', 'flat', 'up', '−0.00014', '−0.01%'],
    [B, 'EURJPY', '168.61', '', '2', 'flat', 'up', '0.182', '0.11%'],
    [B, 'GBPUSD', '1.2667', '', '1', 'flat', 'down', '−0.00167', '−0.13%'],
    [B, 'GBPJPY', '199.5', '9', '0', 'flat', 'up', '0.035', '0.02%'],
    [B, 'XAUUSD', '2316.5', '2', '5', 'flat', 'down', '−16.120', '−0.69%'],
    [null, 'XAUUSD', '2316.53', '', '', 'down', 'down', '−16.38', '−0.70%'],
];
const FOREX = [
    [C, 'AUDUSD', '0.6601', '', '7', 'up', 'up', '−0.00122', '−0.18%'],
    [G, 'AUDNZD', '1.0794', '', '2', 'down', 'down', '0.00374', '0.35%'],
    [C, 'AUDCAD', '0.9073', '', '4', 'flat', 'up', '−0.00075', '−0.08%'],
    [G, 'AUDJPY', '104.02', '', '1', 'up', 'up', '−0.006', '−0.01%'],
    [C, 'AUDCHF', '0.5887', '', '6', 'flat', 'up', '0.00074', '0.13%'],
    [C, 'CADCHF', '0.6488', '', '6', 'flat', 'down', '0.00166', '0.26%'],
    [G, 'CHFJPY', '176.6', '7', '2', 'flat', 'up', '0.004', '0.00%'],
    [C, 'CADJPY', '114.64', '', '0', 'flat', 'down', '0.109', '0.10%'],
    [G, 'EURAUD', '1.6208', '', '9', 'down', 'down', '0.00316', '0.20%'],
    [C, 'EURCAD', '1.4707', '', '7', 'up', 'up', '0.00162', '0.11%'],
    [C, 'EURCHF', '0.9543', '', '6', 'flat', 'down', '0.00268', '0.28%'],
    [G, 'EURNZD', '1.7496', '', '5', 'flat', 'down', '0.00833', '0.48%'],
    [C, 'EURGBP', '0.844', '8', '0', 'flat', 'up', '0.00214', '0.25%'],
    [C, 'GBPAUD', '1.9186', '', '7', 'down', 'down', '0.00247', '0.13%'],
    [C, 'GBPNZD', '2.0711', '', '1', 'up', 'up', '0.00635', '0.31%'],
    [C, 'GBPCHF', '1.1296', '', '6', 'down', 'down', '0.00200', '0.18%'],
    [G, 'GBPCAD', '1.7409', '', '7', 'up', 'up', '−0.00036', '−0.02%'],
    ['#b46acb', 'NZDUSD', '0.611', '6', '0', 'flat', 'up', '−0.00267', '−0.43%'],
];

// [x, body top, body bottom, wick top, wick bottom, rising]
const CANDLES = [
    [200.5, 150, 163, 150, 207], [208, 175, 270, 160, 312], [215.5, 150, 256, 150, 256, 1], [223, 150, 198, 150, 198],
    [230.5, 198, 214, 150, 253], [238, 212, 298, 150, 298], [245.5, 150, 298, 150, 306, 1],
    [372, 158, 158, 150, 163], [379.5, 158, 158, 150, 211], [387, 150, 205, 150, 261], [394.5, 204, 362, 195, 429],
    [402, 317, 362, 262, 424, 1], [409.5, 317, 426, 259, 487], [417, 426, 448, 356, 484], [424.5, 317, 448, 299, 453, 1],
    [432, 249, 317, 229, 317, 1], [439.5, 175, 249, 170, 257, 1], [447, 158, 158, 150, 206], [454.5, 175, 215, 150, 215],
    [462, 209, 215, 180, 228, 1], [469.5, 180, 209, 175, 262, 1], [476, 175, 205, 170, 206], [483.5, 204, 217, 195, 225],
    [491, 216, 267, 215, 283], [498, 215, 267, 180, 285, 1], [505.5, 185, 215, 180, 225, 1], [513, 180, 212, 175, 215],
    [520.5, 211, 258, 207, 261], [528, 150, 258, 150, 266, 1], [535.5, 150, 196, 150, 230], [543, 150, 196, 150, 274, 1],
    [558.5, 158, 158, 150, 161],
    [789.5, 150, 280, 150, 308], [796.5, 184, 280, 163, 280, 1], [803, 184, 223, 174, 266], [810.5, 208, 223, 172, 239, 1],
    [818, 208, 253, 170, 262], [825.5, 230, 253, 217, 325, 1], [833, 230, 234, 211, 279], [840.5, 232, 249, 208, 254],
    [848, 247, 264, 201, 264], [855.5, 193, 264, 189, 277, 1], [863, 174, 194, 166, 210, 1], [870.5, 174, 213, 158, 240],
    [878, 212, 264, 200, 281], [885.5, 262, 342, 251, 343], [893, 341, 416, 312, 537], [900.5, 415, 645, 385, 665],
    [908, 644, 853, 589, 885], [915.5, 853, 915, 848, 1120], [923, 774, 915, 759, 1022, 1], [930.5, 774, 826, 668, 844],
    [938, 825, 890, 808, 1021], [945.5, 889, 1154, 845, 1175], [953, 917, 1154, 907, 1169, 1], [960.5, 760, 917, 749, 965, 1],
    [968, 739, 761, 720, 839, 1], [974.5, 739, 772, 684, 787], [982, 750, 772, 738, 818, 1], [989.5, 665, 751, 665, 760, 1],
    [997, 665, 715, 643, 760], [1004.5, 694, 727, 648, 767, 1], [1012, 656, 694, 624, 711, 1], [1019.5, 656, 711, 648, 721],
    [1027, 693, 711, 649, 738, 1], [1034.5, 693, 723, 689, 755], [1042, 691, 723, 682, 760, 1], [1049.5, 691, 696, 685, 720],
    [1057, 690, 696, 672, 717, 1], [1064.5, 690, 750, 676, 757], [1072, 749, 779, 695, 927], [1079.5, 736, 778, 629, 849, 1],
    [1087, 729, 737, 729, 750, 1],
];

const LOWS = [
    [208, 319], [245.5, 312], [409.5, 494], [469.5, 269], [498, 291], [543, 280], [789, 315], [825.5, 332],
    [855.5, 284], [915.5, 1127], [945.5, 1182], [1004, 774], [1041.5, 767], [1072, 934],
];
const HIGHS = [[818, 164], [930.5, 662], [1011.5, 618], [1057, 667]];
const DAY_LINES = [290.5, 469, 646.5, 825.5];
const DAYS = [[170, 'Mon'], [350, 'Tues'], [527, 'Wed'], [707, 'Thu'], [884, 'Fri'], [1062, 'Mon']];

/* ---------- Components ---------- */

const Chart = () => (
    <PlotSvg viewBox="70 158 1656 1052" preserveAspectRatio="none" role="img" aria-label="EURUSD 1h">
        <rect x="855" y="412" width="871" height="119" fill="#fde1e7" />
        {DAY_LINES.map((x) => (
            <path key={x} d={`M${x} 155V1210`} stroke="#9a9ca3" strokeWidth="1.2" strokeDasharray="7 6.77" />
        ))}
        <path d="M111 330V1170M1003.5 165V1210" stroke="#ece68a" strokeWidth="5" strokeDasharray="25 30" />
        <path d="M1003.5 440v25M1003.5 495v25" stroke="#f5d87e" strokeWidth="5" />
        <circle cx="929.5" cy="673" r="12.5" fill="#b9c5f5" />
        <circle cx="944.5" cy="1167" r="12.5" fill="#b9c5f5" />
        <path d="M931 672h56" stroke="#8a4a86" strokeWidth="1.3" />
        <path d="M1012 623.5h75" stroke="#4f4a5e" strokeWidth="1.3" strokeDasharray="7 7" />
        <path d="M1019.5 649h45v111h-45z" fill="none" stroke="#5d9f68" />
        {CANDLES.map(([x, top, bottom, high, low, up]) => (
            <g key={x}>
                <path d={`M${x} ${high}V${low}`} stroke="#000" strokeWidth="1.3" />
                {bottom > top && (
                    <rect
                        x={x - 2.7}
                        y={top}
                        width="5.4"
                        height={bottom - top}
                        fill={up ? '#5c5b62' : '#000'}
                        stroke="#000"
                    />
                )}
            </g>
        ))}
        {LOWS.map(([x, y]) => (
            <path key={`${x}-${y}`} d={`M${x} ${y - 3}l3.5 5.5h-7z`} fill="#3ddc6e" />
        ))}
        {HIGHS.map(([x, y]) => (
            <path key={`${x}-${y}`} d={`M${x} ${y + 3}l3.5-5.5h-7z`} fill="#e0394b" />
        ))}
        <text x="960" y="664" textAnchor="middle" fontSize="16" fontWeight="700" fill="#25917c" fontFamily="Open Sans, sans-serif">ch</text>
        {DAYS.map(([x, label]) => (
            <text key={x} x={x} y="1099" textAnchor="middle" fontSize="15" fill="#c9c9cc">{label}</text>
        ))}
    </PlotSvg>
);

const QuoteRow = ({ item, selected }) => {
    const [ribbon, symbol, last, tail, pip, tone, tailTone, change, percent] = item;
    const changeTone = change.startsWith('−') ? 'down' : 'up';
    return (
        <Row $selected={selected}>
            <td>
                <SymbolCell>
                    <RibbonSlot>{ribbon && <RibbonShape color={ribbon} />}</RibbonSlot>
                    <PairIcon symbol={symbol} />
                    <SymbolName>{symbol}</SymbolName>
                </SymbolCell>
            </td>
            <td>
                <Value $tone={tone}>{last}</Value>
                {tail && <Value $tone={tailTone}>{tail}</Value>}
                {pip && <Pip $tone={tailTone}>{pip}</Pip>}
            </td>
            <td><Value $tone={changeTone}>{change}</Value></td>
            <td><Value $tone={changeTone}>{percent}</Value></td>
        </Row>
    );
};

const GroupRow = ({ label, height }) => (
    <tr>
        <GroupCell colSpan={4} $h={height}>
            <GroupButton type="button"><Icon name="chevronDown" size={24} weight={1.3} />{label}</GroupButton>
        </GroupCell>
    </tr>
);

const Watchlist = () => (
    <WatchPanel>
        <WatchCard>
            <WatchHead>
                <WatchTitle type="button">WATCHLIST<Icon name="chevronDown" size={28} weight={1.2} /></WatchTitle>
                <HeadIcons>
                    <button type="button" aria-label="Añadir símbolo"><Icon name="plus" size={31} /></button>
                    <button type="button" aria-label="Vista avanzada"><Icon name="pie" /></button>
                    <button type="button" aria-label="Más"><Icon name="dots" size={32} weight={1.2} /></button>
                </HeadIcons>
            </WatchHead>
            <Table>
                <colgroup>
                    <col />
                    <col width="125" />
                    <col width="124" />
                    <col width="134" />
                </colgroup>
                <thead>
                    <tr>
                        <th scope="col">
                            <SymbolCell>
                                <RibbonSlot><RibbonShape color="#cfd0d6" /></RibbonSlot>Símbolo
                            </SymbolCell>
                        </th>
                        <th scope="col">Última</th>
                        <th scope="col">Cbo</th>
                        <th scope="col">Cambio%</th>
                    </tr>
                </thead>
                <tbody>
                    <GroupRow label="TOP" height={53} />
                    {TOP.map((item, i) => <QuoteRow key={i} item={item} selected={i === 0} />)}
                    <GroupRow label="FOREX" height={45} />
                    {FOREX.map((item) => <QuoteRow key={item[1]} item={item} />)}
                </tbody>
            </Table>
        </WatchCard>
        <DetailCard>
            <PairIcon symbol="EURUSD" size={30} />
            <strong>EURUSD</strong>
            <HeadIcons>
                <button type="button" aria-label="Diseño"><Icon name="grid4" /></button>
                <button type="button" aria-label="Nota"><Icon name="edit" /></button>
                <button type="button" aria-label="Más"><Icon name="dots" size={32} weight={1.2} /></button>
            </HeadIcons>
        </DetailCard>
    </WatchPanel>
);

const Rail = () => (
    <IconRail>
        {['list', 'alarm', 'note', 'layers', 'flame', 'bulb'].map((name, i) => (
            <RailButton key={name} type="button" aria-label={name} $active={i === 0}><Icon name={name} /></RailButton>
        ))}
        <RailRule />
        <RailButton type="button" aria-label="chat">
            <Icon name="chat" />
            <CountBadge $top={0} $right={0} $size={20}>2</CountBadge>
        </RailButton>
        <RailButton type="button" aria-label="stream"><Icon name="stream" /></RailButton>
        <Spacer />
        {['target', 'calendar', 'help'].map((name) => (
            <RailButton key={name} type="button" aria-label={name}><Icon name={name} /></RailButton>
        ))}
    </IconRail>
);

const BrowserTabs = () => (
    <TabStrip>
        {PINNED.map(([kind, opts = {}], i) => (
            <PinnedTab key={i} type="button" aria-label={`${kind} ${i + 1}`} $active={opts.active}>
                <Favicon kind={kind} />
                {opts.media && (
                    <MediaBadge>
                        <svg width="6" height="6" viewBox="0 0 6 6" fill="#55555a">
                            <path d={opts.media === 'play' ? 'M1 0l5 3-5 3z' : 'M0 2h2l2-2v6L2 4H0zM5 1h1v4H5z'} />
                        </svg>
                    </MediaBadge>
                )}
                {opts.dot && <LoadedDot />}
            </PinnedTab>
        ))}
        <TabScroll type="button" aria-label="Anterior" $dim $width={42}><Icon name="chevronLeftL" size={22} weight={1.5} /></TabScroll>
        <TextTabs>
            {['FX:EU', 'FX:GB', 'FX:GB', 'FX:GB'].map((label, i) => (
                <TextTab key={i} type="button"><Favicon kind="tv" /><TabTitle>{label}</TabTitle></TextTab>
            ))}
            <TextTab type="button" aria-label="FX"><Favicon kind="tv" /></TextTab>
        </TextTabs>
        <TabScroll type="button" aria-label="Siguiente" $width={38}><Icon name="chevronRightL" size={22} weight={1.5} /></TabScroll>
        <TabScroll type="button" aria-label="Lista de pestañas" $width={54}><Icon name="chevronDownL" size={20} weight={1.5} /></TabScroll>
        <WindowButtons>
            {['minimise', 'restore', 'close'].map((name) => (
                <TabScroll key={name} type="button" aria-label={name} $width={58}><Icon name={name} size={20} weight={1.5} /></TabScroll>
            ))}
        </WindowButtons>
    </TabStrip>
);

const FoxIcon = () => (
    <svg width="24" height="24" viewBox="0 0 24 24">
        <path d="m2 2 7 5h6l7-5-1 9 1 6-4 5-4-1h-4l-4 1-4-5 1-6z" fill="#e8802c" />
        <path d="m2 2 7 5-5 3zM22 2l-7 5 5 3z" fill="#a5532a" />
        <path d="M9 19h6l-1 2.5h-4z" fill="#3a2c25" />
        <circle cx="8.5" cy="13" r="1.3" fill="#3a2c25" /><circle cx="15.5" cy="13" r="1.3" fill="#3a2c25" />
    </svg>
);

const MoonIcon = () => (
    <svg width="28" height="28" viewBox="0 0 28 28">
        <circle cx="13" cy="16" r="9.5" fill="#45464d" />
        <path d="M12 8v8a3 3 0 0 0 6 0" fill="none" stroke="#f4f4f6" strokeWidth="2.5" />
        <path d="M21 1l5 10H16z" fill="#f5a623" />
    </svg>
);

const BrowserNav = () => (
    <NavBar>
        <NavButton type="button" aria-label="Atrás" $dim><Icon name="back" size={26} weight={1.8} /></NavButton>
        <NavButton type="button" aria-label="Adelante" $dim><Icon name="forward" size={26} weight={1.8} /></NavButton>
        <NavButton type="button" aria-label="Recargar"><Icon name="reload" size={26} weight={2} /></NavButton>
        <AddressBox>
            <Icon name="shield" size={24} weight={2} />
            <Icon name="padlock" size={24} weight={2} />
            <Icon name="sliders" size={22} weight={2} />
            <AddressInput aria-label="Dirección" defaultValue="https://es.tradingview.com/chart/gWqTo0Oz/?symbol=OANDA%3ANZDCAD" />
            <Icon name="star" size={24} weight={2} />
        </AddressBox>
        <NavButton type="button" aria-label="Captura"><Icon name="capture" size={24} weight={2} /></NavButton>
        <NavButton type="button" aria-label="Contenedores"><Icon name="windowIcon" size={22} weight={2} /></NavButton>
        <NavButton type="button" aria-label="Guardar en Pocket"><Icon name="pocket" size={22} weight={2} /></NavButton>
        <NavButton type="button" aria-label="Extensión"><MoonIcon /></NavButton>
        <NavButton type="button" aria-label="Monedero"><FoxIcon /></NavButton>
        <NavButton type="button" aria-label="Extensiones"><Icon name="puzzle" size={24} weight={2} /></NavButton>
        <NavButton type="button" aria-label="Menú"><Icon name="menu" size={21} weight={2} /></NavButton>
    </NavBar>
);

const ChartHeader = () => (
    <TopBar>
        <Avatar type="button" aria-label="Perfil">J<CountBadge $top={-7} $right={-12} $size={22}>11</CountBadge></Avatar>
        <ToolButton type="button" $bold $size={16}><Icon name="search" size={30} weight={1.5} />EURUSD</ToolButton>
        <PlusButton type="button" aria-label="Comparar"><Icon name="plusCircle" /></PlusButton>
        <Rule />
        <Intervals>
            {INTERVALS.map((label) => (
                <ToolButton key={label} type="button" $size={16} $accent={label === '1h'}>{label}</ToolButton>
            ))}
        </Intervals>
        <ToolButton type="button" aria-label="Intervalos"><Icon name="chevronDown" size={30} weight={1.3} /></ToolButton>
        <Rule $m={5} />
        <ToolButton type="button" aria-label="Línea"><Icon name="lineStyle" size={40} /></ToolButton>
        <ToolButton type="button" aria-label="Velas" $accent><Icon name="candles" size={37} /></ToolButton>
        <ToolButton type="button" aria-label="Tipo de gráfico"><Icon name="chevronDown" size={30} weight={1.3} /></ToolButton>
        <Rule />
        <ToolButton type="button"><Icon name="indicators" />Indicadores</ToolButton>
        <ToolButton type="button" aria-label="Favoritos"><Icon name="chevronDown" size={50} /></ToolButton>
        <ToolButton type="button" aria-label="Plantillas"><Icon name="grid4" size={31} /></ToolButton>
        <Rule $m={12} />
        <ToolButton type="button"><Icon name="alarmAdd" size={36} />Alerta</ToolButton>
        <ReplayButton type="button"><Icon name="replay" />Reproducción</ReplayButton>
        <Rule $m={17} />
        <ToolButton type="button" aria-label="Deshacer"><Icon name="undo" /></ToolButton>
        <RedoButton type="button" aria-label="Rehacer" $dim><Icon name="redo" /></RedoButton>
        <Spacer />
        <ToolButton type="button" aria-label="Diseño"><Icon name="square" /></ToolButton>
        <LayoutName type="button">DIRECTO<small>Guardar</small></LayoutName>
        <ToolButton type="button" aria-label="Gestionar diseño"><Icon name="chevronDown" size={38} /></ToolButton>
        <Rule $m={5} />
        <RightTools>
            {['quick', 'hex', 'fullscreen', 'camera'].map((name) => (
                <ToolButton key={name} type="button" aria-label={name}><Icon name={name} /></ToolButton>
            ))}
        </RightTools>
        <Publish type="button">Publicar</Publish>
    </TopBar>
);

const App = () => (
    <>
        <GlobalStyle />
        <Window>
            <BrowserTabs />
            <BrowserNav />
            <ChartHeader />
            <Workspace>
                <SideTools>
                    {SIDE_TOOLS.map((group, i) => (
                        <React.Fragment key={i}>
                            {i > 0 && <SideRule />}
                            {group.map((name) => (
                                <SideTool key={name} type="button" aria-label={name} $accent={name === 'cross'}>
                                    <Icon name={name} />
                                </SideTool>
                            ))}
                        </React.Fragment>
                    ))}
                    <FavoriteButton type="button" aria-label="Favoritos"><Icon name="star" size={32} weight={1.3} /></FavoriteButton>
                </SideTools>
                <Center>
                    <ChartCard>
                        <PlotRow>
                            <Plot>
                                <Chart />
                                <Legend>
                                    <LegendRow>
                                        <PairIcon symbol="EURUSD" />
                                        <LegendName>EURUSD · 1h · FXCM</LegendName>
                                        <RibbonShape color={B} />
                                        <MarketDot />
                                        <Ohlc>
                                            <span>O1,07006</span><span>H1,07012</span><span>L1,06996</span><span>C1,07012</span>
                                        </Ohlc>
                                    </LegendRow>
                                    <MutedRow>Timings 9.0<Icon name="eyeOff" size={24} /></MutedRow>
                                    <LegendRow>Fractals</LegendRow>
                                    <LegendRow>FXN - Week and Day Separator</LegendRow>
                                    <Collapse type="button" aria-label="Contraer"><Icon name="chevronUp" size={12} weight={3.5} /></Collapse>
                                </Legend>
                                <PlotLogo><TvLogo width={38} color="#131313" /></PlotLogo>
                            </Plot>
                            <PriceAxis>
                                <CurrencyField>
                                    <CurrencySelect aria-label="Divisa" defaultValue="USD"><option>USD</option></CurrencySelect>
                                    <Icon name="chevronDown" size={22} weight={2} />
                                </CurrencyField>
                                <PriceScale>
                                    {PRICES.map((price, i) => <span key={i}>{price}</span>)}
                                </PriceScale>
                                <LastPrice>1,07012<br />58:14</LastPrice>
                            </PriceAxis>
                        </PlotRow>
                        <TimeRow>
                            <TimeScale>
                                <TimeTrack>
                                    {DATES.map((d) => <span key={d}>{WEEK_STARTS.includes(d) ? <strong>{d}</strong> : d}</span>)}
                                </TimeTrack>
                            </TimeScale>
                            <AxisSettings type="button" aria-label="Ajustes de escala"><Icon name="hex" size={26} weight={1.3} /></AxisSettings>
                        </TimeRow>
                        <RangeBar>
                            <Ranges>
                                {RANGES.map((label) => <button key={label} type="button">{label}</button>)}
                            </Ranges>
                            <Rule $m={13} />
                            <ToolButton type="button" aria-label="Ir a"><Icon name="goTo" size={32} /></ToolButton>
                            <Spacer />
                            <button type="button">10:01:45 (UTC+2)</button>
                        </RangeBar>
                    </ChartCard>
                    <BottomBar>
                        <PanelTab type="button" $after={21}>Analizador de acciones<Icon name="chevronDown" /></PanelTab>
                        <PanelTab type="button">Editor de Pine</PanelTab>
                        <PanelTab type="button">Simulador de estrategias</PanelTab>
                        <PanelControls>
                            <ToolButton type="button" aria-label="Abrir panel"><Icon name="chevronUp" /></ToolButton>
                            <ToolButton type="button" aria-label="Maximizar panel"><Icon name="expand" size={33} /></ToolButton>
                        </PanelControls>
                        <FloatingTools>
                            <DragHandle>
                                <svg width="9" height="18" viewBox="0 0 9 18" fill="#b9bbc2">
                                    {[2, 9, 16].map((y) => <path key={y} d={`M1 ${y - 1}h2v2H1zM6 ${y - 1}h2v2H6z`} />)}
                                </svg>
                            </DragHandle>
                            {FLOATING.map((name) => (
                                <FloatingTool key={name} type="button" aria-label={name} $accent={name === 'cross'}>
                                    <Icon name={name} />
                                </FloatingTool>
                            ))}
                        </FloatingTools>
                    </BottomBar>
                </Center>
                <Watchlist />
                <Rail />
            </Workspace>
        </Window>
    </>
);

export default App;
